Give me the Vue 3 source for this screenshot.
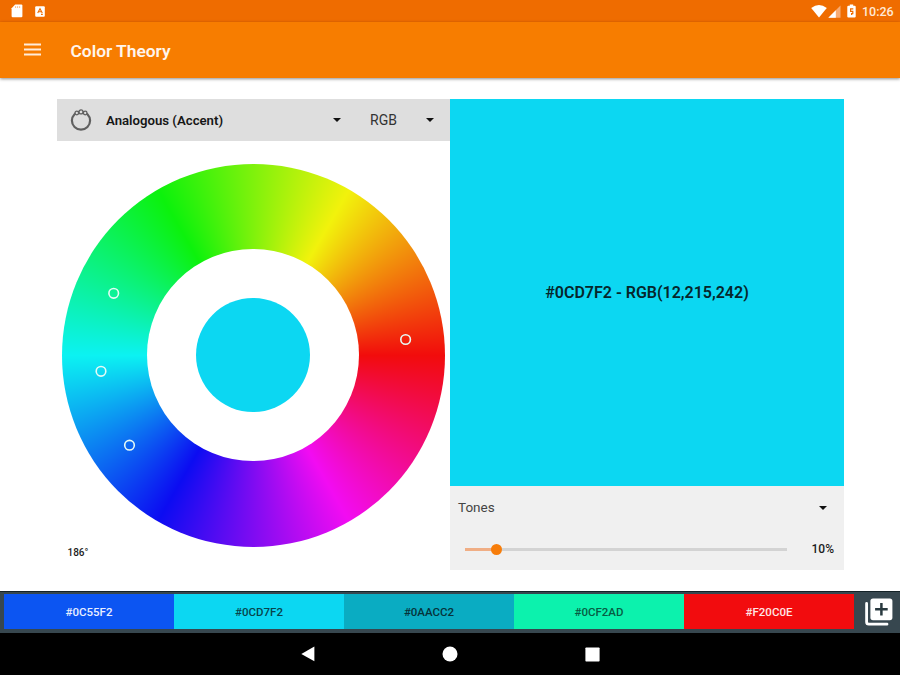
<script setup>
const swatches = [
  { hex: '#0C55F2', text: '#e8eeff' },
  { hex: '#0CD7F2', text: '#07454d' },
  { hex: '#0AACC2', text: '#06333a' },
  { hex: '#0CF2AD', text: '#075c43' },
  { hex: '#F20C0E', text: '#ffe6e6' },
]
const markers = [
  { x: 51.7, y: 129.3 },
  { x: 39, y: 207.3 },
  { x: 67.5, y: 281.2 },
  { x: 343.6, y: 175.5 },
]
const tone = 10
</script>

<template>
  <div class="screen">
    <div class="status">
      <svg class="sd" width="12" height="14" viewBox="0 0 12 14"><path d="M4.2 0.5H10.3Q11.4 0.5 11.4 1.6V12.2Q11.4 13.3 10.3 13.3H1.7Q0.6 13.3 0.6 12.2V4.2Z" fill="#fff" /><path d="M4.6 2.2V4M6.6 2.2V4M8.6 2.2V4" stroke="#f9b27c" stroke-width="0.9" /></svg>
      <svg class="badge" width="10" height="11" viewBox="0 0 10 11"><rect x="0.2" y="0.3" width="9.6" height="10.4" rx="1" fill="#fff" /><path d="M2.7 7L5 2.7L7.3 7M3.5 5.8H6.5M6 8.4H7.8" fill="none" stroke="#ef6c00" stroke-width="1.1" /></svg>
      <span class="grow"></span>
      <svg class="wifi" width="16" height="13" viewBox="0 0 16 13"><path d="M8 12.5L0.2 3Q8 -2.8 15.8 3Z" fill="#fff" /></svg>
      <svg class="signal" width="13" height="13" viewBox="0 0 13 13"><path d="M0.3 12.7L12.5 0.5V12.7Z" fill="#f8ab73" /><path d="M0.3 12.7L7.8 5.2V12.7Z" fill="#fff" /></svg>
      <svg class="battery" width="9" height="14" viewBox="0 0 9 14"><path d="M2.8 0.4H6.2V1.7H7.6Q8.7 1.7 8.7 2.8V12.5Q8.7 13.6 7.6 13.6H1.4Q0.3 13.6 0.3 12.5V2.8Q0.3 1.7 1.4 1.7H2.8Z" fill="#fff" /><path d="M6.3 4.9H3.6V7.3H5.8V9.6H4.6V11" fill="none" stroke="#ef6c00" stroke-width="1.2" /></svg>
      <span class="time">10:26</span>
    </div>
    <header class="appbar">
      <svg class="menu" width="17" height="13" viewBox="0 0 17 13"><path d="M0 1.5H17M0 6.5H17M0 11.5H17" stroke="#ffecd9" stroke-width="2" /></svg>
      <h1>Color Theory</h1>
    </header>

    <main class="content">
      <section class="picker">
        <div class="toolbar">
          <svg class="ring" width="22" height="22" viewBox="0 0 22 22" fill="none" stroke="#606060">
            <circle cx="11" cy="11.6" r="9.1" stroke-width="2.2" />
            <g fill="#dedede" stroke-width="1.3"><circle cx="6.8" cy="4" r="1.8" /><circle cx="15.2" cy="4" r="1.8" /><circle cx="11" cy="2.9" r="2" /></g>
          </svg>
          <span class="scheme">Analogous (Accent)</span>
          <i class="caret"></i>
          <span class="mode">RGB</span>
          <i class="caret"></i>
        </div>
        <div class="wheel">
          <div class="hole"><div class="core"></div></div>
          <svg class="markers" width="383" height="383" viewBox="0 0 383 383">
            <circle v-for="(m, i) in markers" :key="i" :cx="m.x" :cy="m.y" r="4.8" />
          </svg>
        </div>
        <div class="angle">186°</div>
      </section>

      <section class="detail">
        <div class="preview">#0CD7F2 - RGB(12,215,242)</div>
        <div class="tones">
          <div class="tone-head"><span>Tones</span><i class="caret"></i></div>
          <div class="tone-row">
            <div class="track">
              <div class="fill" :style="{ width: tone + '%' }"></div>
              <div class="thumb" :style="{ left: tone + '%' }"></div>
            </div>
            <span class="percent">{{ tone }}%</span>
          </div>
        </div>
      </section>
    </main>

    <div class="palette">
      <div v-for="s in swatches" :key="s.hex" class="swatch" :style="{ background: s.hex, color: s.text }">{{ s.hex }}</div>
      <svg class="add" width="28" height="28" viewBox="0 0 28 28">
        <path d="M1.6 5.5V24Q1.6 26.2 3.8 26.2H22" fill="none" stroke="#fff" stroke-width="2.8" stroke-linecap="round" />
        <rect x="5.4" y="0.4" width="22" height="21.8" rx="2.6" fill="#fff" />
        <path d="M16.4 5V17.6M10.1 11.3H22.7" stroke="#29393f" stroke-width="2.5" />
      </svg>
    </div>

    <nav class="nav">
      <svg width="14" height="16" viewBox="0 0 14 16"><path d="M13.4 0.5V15.3L0.3 7.9Z" fill="#fff" /></svg>
      <svg width="16" height="16" viewBox="0 0 16 16"><circle cx="8" cy="8" r="7.5" fill="#fff" /></svg>
      <svg width="15" height="15" viewBox="0 0 15 15"><rect x="0.4" y="0.4" width="14.2" height="14.2" rx="0.8" fill="#fff" /></svg>
    </nav>
  </div>
</template>

<style>
body { margin: 0; background: #fff; }
</style>

<style scoped>
* { box-sizing: border-box; }
svg { display: block; flex: none; }
.screen { width: 900px; height: 675px; display: flex; flex-direction: column; overflow: hidden; background: #fff; font-family: Roboto, "Liberation Sans", sans-serif; color: #1c1c1c; }
.status { height: 22px; flex: none; display: flex; align-items: center; padding: 0 6px 0 11px; background: #ef6c00; }
.badge { margin-left: 12px; }
.grow { flex: 1; }
.signal { margin-left: 1px; margin-top: 1px; }
.battery { margin-left: 6px; }
.time { width: 32px; margin-left: 6px; font-size: 12.5px; line-height: 22px; font-weight: 500; color: #ffe9d6; white-space: nowrap; padding-top: 1px; }
.appbar { position: relative; height: 56px; flex: none; display: flex; align-items: center; padding-left: 23.5px; background: #f77d00; box-shadow: 0 1px 3px rgba(0, 0, 0, 0.45); }
.menu { margin-top: -2px; }
.appbar h1 { margin: 1px 0 0 30px; font-size: 17.4px; line-height: 24px; font-weight: 600; letter-spacing: -0.02px; color: #fff5ec; }
.content { flex: 1; display: flex; padding: 20.5px 56px 0 56.5px; }
.picker { width: 393.5px; }
.toolbar { height: 42.5px; display: flex; align-items: center; padding: 0 16.5px 0 13.5px; background: #dedede; }
.scheme { flex: 1; margin-left: 14px; padding-top: 1px; font-size: 13.2px; font-weight: 600; color: #161616; }
.caret { width: 0; height: 0; margin-top: 1px; border: 4.5px solid transparent; border-top-color: #111; border-bottom: 0; }
.mode { width: 55.5px; margin-left: 29px; padding-top: 1px; font-size: 14px; color: #333; }
.wheel { position: relative; width: 383px; height: 383px; margin: 23px 0 0 5.5px; border-radius: 50%; display: grid; place-items: center; background: conic-gradient(from 90deg, #f20c0c, #f20cf2, #0c0cf2, #0cf2f2, #0cf20c, #f2f20c, #f20c0c); }
.hole { width: 212px; height: 212px; margin: 0 1px 1px 0; border-radius: 50%; background: #fff; display: grid; place-items: center; }
.core { width: 114px; height: 114px; border-radius: 50%; background: #0cd7f2; }
.markers { position: absolute; inset: 0; fill: none; stroke: #e6fbf6; stroke-width: 1.6; }
.angle { margin: 0 0 0 11px; font-size: 10px; line-height: 12px; font-weight: 500; }
.detail { flex: 1; }
.preview { height: 387px; padding-top: 1px; display: flex; align-items: center; justify-content: center; background: #0cd7f2; color: #06262b; font-size: 16px; font-weight: 600; }
.tones { height: 84.5px; background: #f0f0f0; }
.tone-head { height: 43px; display: flex; align-items: center; justify-content: space-between; padding: 0 17px 0 8px; font-size: 13.5px; color: #444; }
.tone-row { height: 40px; display: flex; align-items: center; padding: 1px 10px 0 14.5px; }
.track { position: relative; width: 322px; height: 3px; background: #d3d3d3; }
.fill { height: 3px; background: #f0ae85; }
.thumb { position: absolute; top: -4px; width: 11px; height: 11px; margin-left: -5.5px; border-radius: 50%; background: #f77d0a; }
.percent { flex: 1; text-align: right; font-size: 12px; font-weight: 500; }
.palette { height: 42px; flex: none; display: flex; padding: 2px 7px 4px 4px; background: #37474f; border-top: 1.5px solid #142227; }
.swatch { width: 170.2px; display: flex; align-items: center; justify-content: center; font-size: 11.5px; font-weight: 500; }
.add { margin: 4px 0 0 11px; }
.nav { height: 42px; flex: none; display: flex; align-items: center; justify-content: space-between; padding: 0 300px 0 301px; background: #000; }
</style>
